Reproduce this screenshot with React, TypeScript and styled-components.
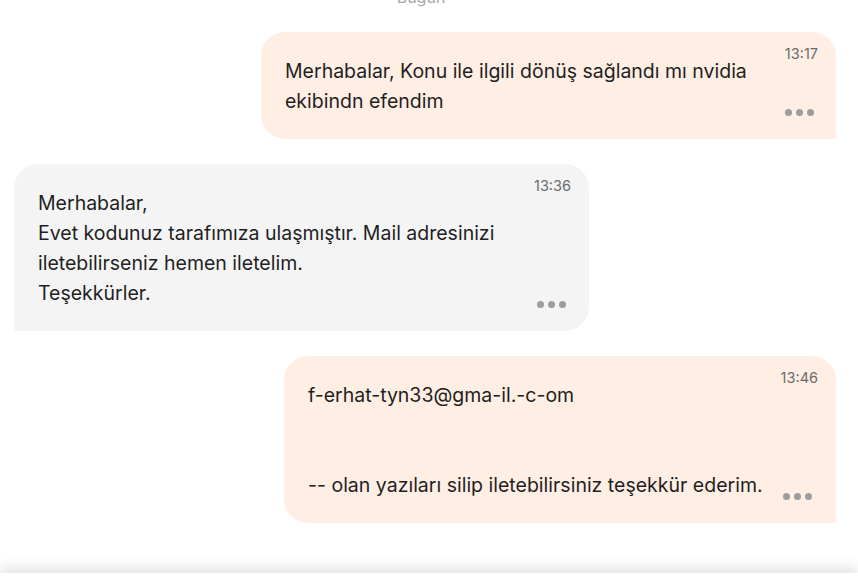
import React from "react";
import styled, { createGlobalStyle } from "styled-components";

const Global = createGlobalStyle`
  html, body { margin: 0; padding: 0; background: #ffffff; }
  body { font-family: Inter, "Noto Sans", Arial, sans-serif; }
  * { box-sizing: border-box; }
`;

const Page = styled.div`
  height: 100vh;
  display: flex;
  flex-direction: column;
  overflow: hidden;
  background: #ffffff;
`;

const ChatArea = styled.div`
  flex: 1 1 auto;
  min-height: 0;
  overflow: hidden;
  display: flex;
  flex-direction: column;
  gap: 25px;
  padding: 0 22px 0 14px;
`;

const DateLabel = styled.div`
  align-self: center;
  margin-top: -13px;
  margin-bottom: 0;
  font-size: 16px;
  line-height: 20px;
  color: #a8a8a8;
  transform: translateX(-4px);
`;

const Bubble = styled.div<{ $out?: boolean }>`
  align-self: ${(p) => (p.$out ? "flex-end" : "flex-start")};
  max-width: 575px;
  display: flex;
  flex-direction: row;
  align-items: stretch;
  gap: 18px;
  padding: 14px 18px 23px 24px;
  background: ${(p) => (p.$out ? "#ffeee4" : "#f4f4f4")};
  border-radius: ${(p) => (p.$out ? "24px 24px 0 24px" : "24px 24px 24px 0")};
`;

const Text = styled.div`
  flex: 1 1 auto;
  min-width: 0;
  margin-top: 10px;
  font-size: 19.5px;
  line-height: 30px;
  color: #1f1f1f;
  white-space: pre-wrap;
`;

const Meta = styled.div`
  flex: 0 0 auto;
  display: flex;
  flex-direction: column;
  justify-content: space-between;
  align-items: center;
`;

const Time = styled.span`
  font-size: 14.5px;
  line-height: 16px;
  color: #6b6b6b;
`;

const Dots = styled.div`
  display: flex;
  gap: 4px;
  margin-bottom: 0.5px;
  margin-right: 3px;
`;

const Dot = styled.span`
  width: 7px;
  height: 7px;
  border-radius: 50%;
  background: #9d9d9d;
`;

const Footer = styled.div`
  flex: 0 0 15px;
  background: #ffffff;
  box-shadow: 0 -5px 14px rgba(0, 0, 0, 0.12);
  position: relative;
  z-index: 1;
`;

type Msg = { out: boolean; time: string; text: string };

const messages: Msg[] = [
  {
    out: true,
    time: "13:17",
    text: "Merhabalar, Konu ile ilgili dönüş sağlandı mı nvidia ekibindn efendim",
  },
  {
    out: false,
    time: "13:36",
    text:
      "Merhabalar,\nEvet kodunuz tarafımıza ulaşmıştır. Mail adresinizi iletebilirseniz hemen iletelim.\nTeşekkürler.",
  },
  {
    out: true,
    time: "13:46",
    text:
      "f-erhat-tyn33@gma-il.-c-om\n\n\n-- olan yazıları silip iletebilirsiniz teşekkür ederim.",
  },
];

export default function App() {
  return (
    <Page>
      <Global />
      <ChatArea>
        <DateLabel>Bugün</DateLabel>
        {messages.map((m, i) => (
          <Bubble key={i} $out={m.out}>
            <Text>{m.text}</Text>
            <Meta>
              <Time>{m.time}</Time>
              <Dots>
                <Dot />
                <Dot />
                <Dot />
              </Dots>
            </Meta>
          </Bubble>
        ))}
      </ChatArea>
      <Footer />
    </Page>
  );
}
